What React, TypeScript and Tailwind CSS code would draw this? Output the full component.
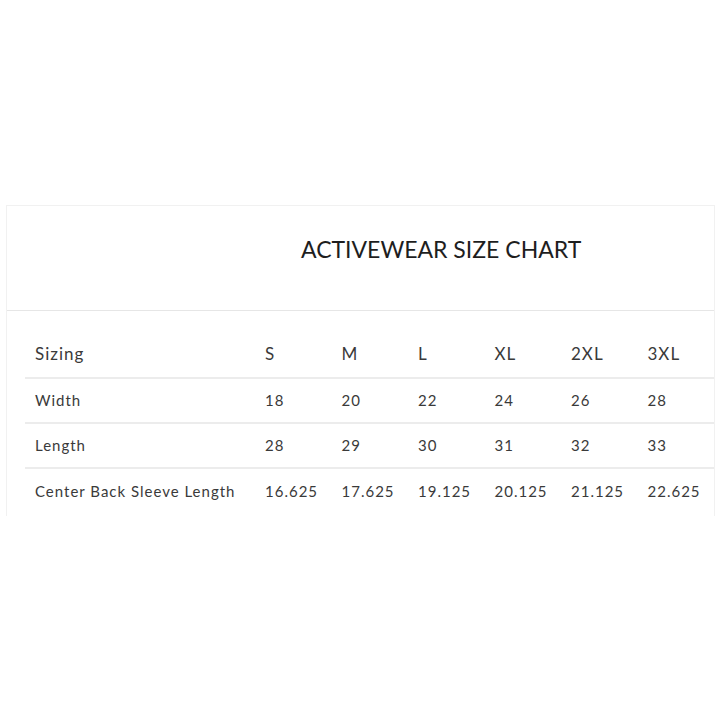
import React from "react";

const sizes = ["S", "M", "L", "XL", "2XL", "3XL"];
const rows: { label: string; values: string[] }[] = [
  { label: "Width", values: ["18", "20", "22", "24", "26", "28"] },
  { label: "Length", values: ["28", "29", "30", "31", "32", "33"] },
  {
    label: "Center Back Sleeve Length",
    values: ["16.625", "17.625", "19.125", "20.125", "21.125", "22.625"],
  },
];

export default function App() {
  return (
    <div
      className="w-[720px] h-[720px] bg-white pt-[205px] pl-[6px]"
      style={{ fontFamily: "Lato, 'Liberation Sans', sans-serif" }}
    >
      <div className="w-[709px] border border-b-0 border-[#f1f1f1]">
        <div className="h-[105px] flex items-center pl-[294px] pb-[18px] border-b border-[#e6e6e6]">
          <h1 className="text-[23px] leading-none text-[#1e1e1e]">
            ACTIVEWEAR SIZE CHART
          </h1>
        </div>
        <div className="pl-[18px] pt-[21px] pb-[2px]">
          <div className="grid grid-cols-[230px_repeat(6,1fr)] h-[47px] items-center border-b-2 border-[#ececec] text-[17px] text-[#3a3a3a] tracking-[1px]">
            <div className="pl-[10px] pb-[2px]">Sizing</div>
            {sizes.map((s) => (
              <div key={s} className="pl-[10px] pb-[2px]">
                {s}
              </div>
            ))}
          </div>
          {rows.map((r, i) => (
            <div
              key={r.label}
              className={`grid grid-cols-[230px_repeat(6,1fr)] h-[45px] items-center text-[15px] text-[#3a3a3a] tracking-[1px] ${
                i < rows.length - 1 ? "border-b-2 border-[#ececec]" : ""
              }`}
            >
              <div className="pl-[10px]">{r.label}</div>
              {r.values.map((v, j) => (
                <div key={j} className="pl-[10px]">
                  {v}
                </div>
              ))}
            </div>
          ))}
        </div>
      </div>
    </div>
  );
}
